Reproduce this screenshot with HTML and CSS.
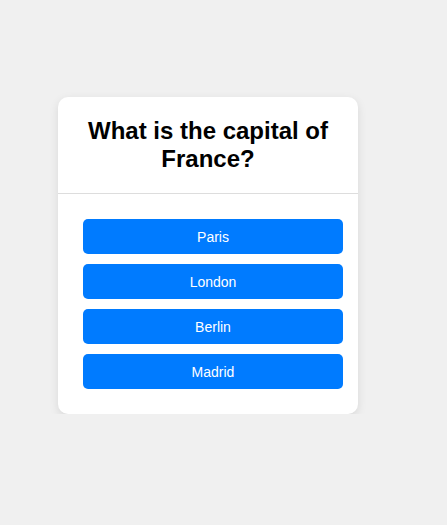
FILE: index.html
```html
<!DOCTYPE html>
<html lang="en">

<head>
  <meta charset="UTF-8">
  <title>Quiz</title>
  <link rel="stylesheet" href="styles.css">
</head>

<body>
  <div class="quiz">
    <div class="question">
      <h2>What is the capital of France?</h2>
    </div>
    <div class="answers">
      <button>Paris</button>
      <button>London</button>
      <button>Berlin</button>
      <button>Madrid</button>
    </div>
  </div>
</body>

</html>
```

FILE: styles.css
```css
body {
  font-family: "Liberation Sans", Arial, sans-serif;
  margin: 0;
  padding: 97px 0 0 58px;
  background: #f0f0f0;
}

.quiz {
  width: 300px;
  background: #fff;
  border-radius: 10px;
  box-shadow: 0 3px 10px rgba(0, 0, 0, 0.1);
}

.question {
  padding: 20px 20px;
  border-bottom: 1px solid #ddd;
  text-align: center;
}

.question h2 {
  margin: 0;
  font-size: 24px;
  line-height: 28px;
}

.answers {
  padding: 25px 15px 25px 25px;
  display: flex;
  flex-direction: column;
  gap: 10px;
}

button {
  height: 35px;
  font-family: "Liberation Sans", Arial, sans-serif;
  font-size: 14px;
  border: none;
  border-radius: 5px;
  background: #007bff;
  color: #fff;
  cursor: pointer;
}
```
